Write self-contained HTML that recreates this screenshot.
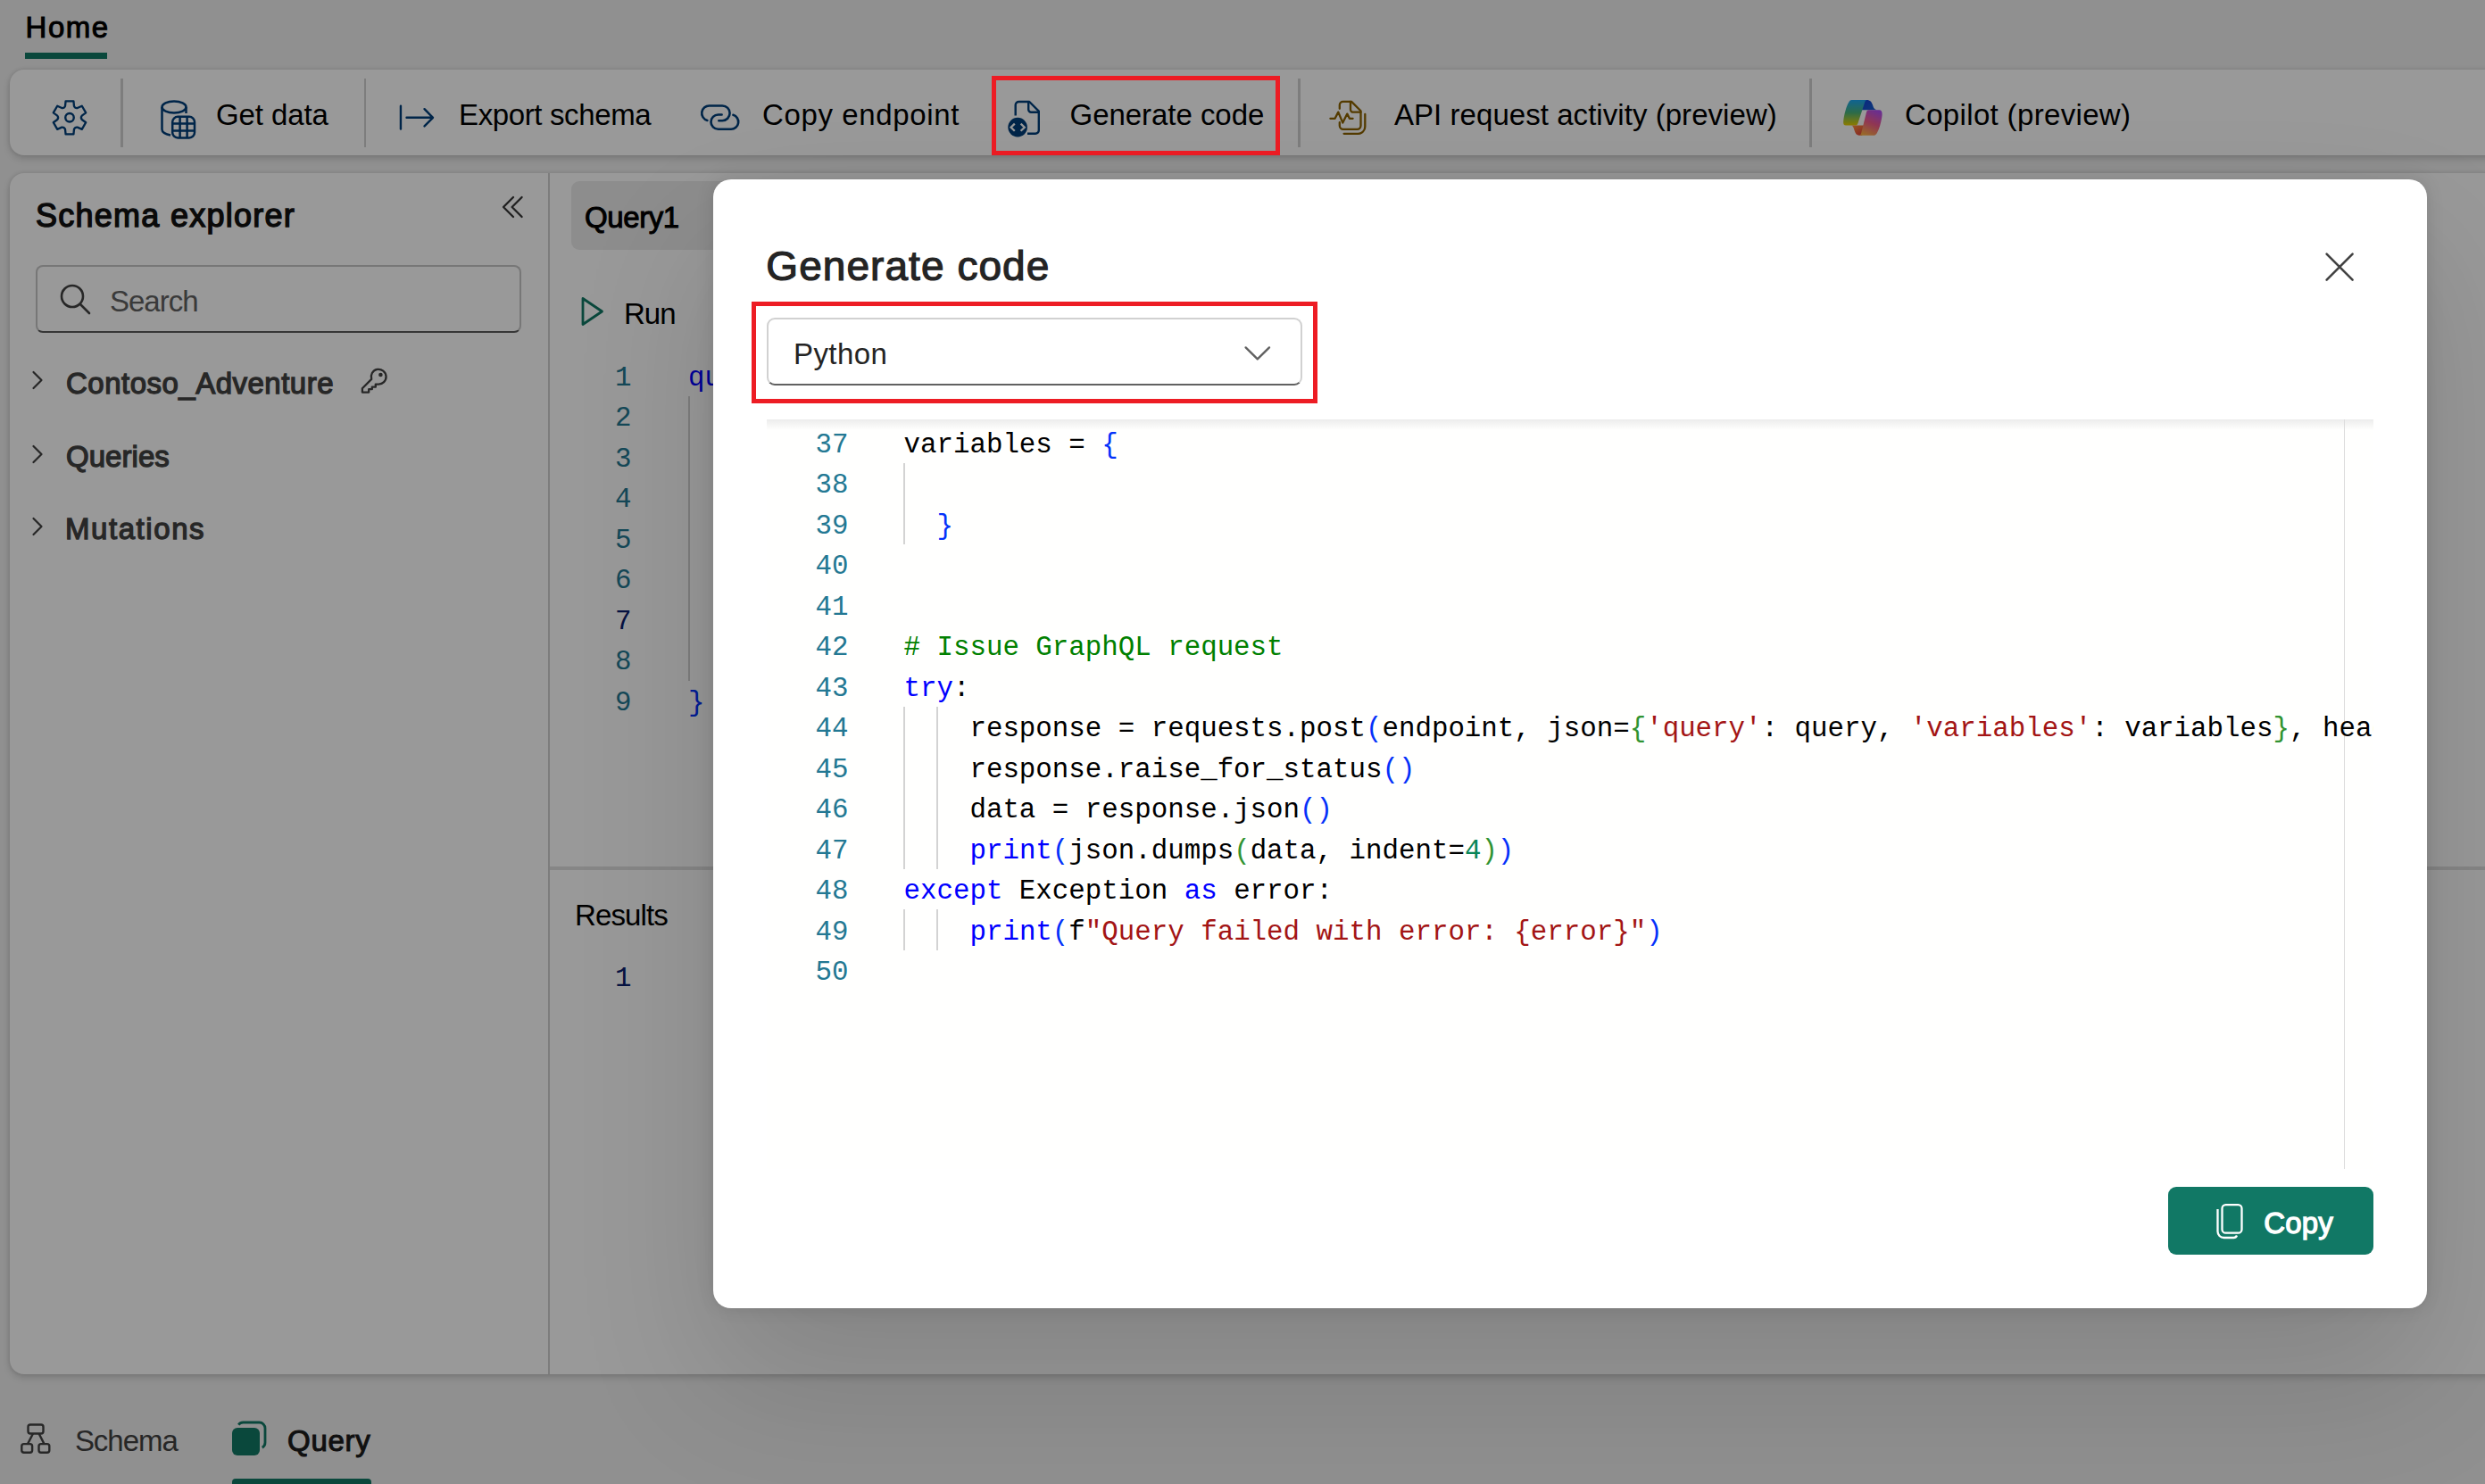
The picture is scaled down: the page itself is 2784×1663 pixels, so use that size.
<!DOCTYPE html>
<html><head><meta charset="utf-8"><style>
html,body{margin:0;padding:0}
body{width:2784px;height:1663px;position:relative;overflow:hidden;background:#f0f0f0;font-family:"Liberation Sans",sans-serif}
.t{position:absolute;white-space:pre}
.m{position:absolute;white-space:pre;font-family:"Liberation Mono",monospace;font-size:30.8px;line-height:45.52px}
.ic{position:absolute}
.card{position:absolute;background:#fff;box-shadow:0 0 5px rgba(0,0,0,0.12),0 4px 9px rgba(0,0,0,0.14)}
#overlay{position:absolute;left:0;top:0;width:2784px;height:1663px;background:rgba(0,0,0,0.4)}
#dlg{position:absolute;left:799px;top:201px;width:1920px;height:1265px;background:#fff;border-radius:20px;box-shadow:0 0 20px rgba(0,0,0,0.12),0 80px 160px rgba(0,0,0,0.14)}
.red{position:absolute;box-sizing:border-box;border:5px solid #ed1c24}
</style></head><body>
<div class="t" style="left:28.6px;top:14.0px;font-size:33px;line-height:33px;font-weight:400;letter-spacing:1.47px;color:#000000;-webkit-text-stroke:1.0px #000000;">Home</div>
<div style="position:absolute;left:28px;top:59px;width:92px;height:7px;background:#117865"></div>
<div class="card" style="left:11px;top:78px;width:2850px;height:96px;border-radius:16px"></div>
<svg class="ic" style="left:55px;top:108px" width="46" height="48" viewBox="0 0 46 48"><path d="M18.02,10.82 L18.56,5.32 L27.44,5.32 L27.98,10.82 Q29.00,13.41 31.75,13.00 L36.78,10.72 L41.22,18.40 L36.73,21.63 Q35.00,23.80 36.73,25.97 L41.22,29.20 L36.78,36.88 L31.75,34.60 Q29.00,34.19 27.98,36.78 L27.44,42.28 L18.56,42.28 L18.02,36.78 Q17.00,34.19 14.25,34.60 L9.22,36.88 L4.78,29.20 L9.27,25.97 Q11.00,23.80 9.27,21.63 L4.78,18.40 L9.22,10.72 L14.25,13.00 Q17.00,13.41 18.02,10.82 Z" fill="none" stroke="#003f7a" stroke-width="2.3" stroke-linejoin="round"/><circle cx="23" cy="23.8" r="4.75" fill="none" stroke="#003f7a" stroke-width="2.4"/></svg>
<div style="position:absolute;left:135px;top:88px;width:2.5px;height:77px;background:#d1d1d1"></div>
<div style="position:absolute;left:407.5px;top:88px;width:2.5px;height:77px;background:#d1d1d1"></div>
<div style="position:absolute;left:1454px;top:88px;width:2.5px;height:77px;background:#d1d1d1"></div>
<div style="position:absolute;left:2027px;top:88px;width:2.5px;height:77px;background:#d1d1d1"></div>
<svg class="ic" style="left:178px;top:111px" width="44" height="46" viewBox="0 0 44 46">
<g fill="none" stroke="#003f7a" stroke-width="2.5">
<ellipse cx="17" cy="9" rx="13.5" ry="6.5"/>
<path d="M3.5,9 V34 C3.5,37 8,39.5 13,40.5"/>
<path d="M30.5,9 V16"/>
<rect x="15.2" y="19.8" width="24.8" height="23.6" rx="6"/>
<path d="M23.6,19.8 V43.4 M31.6,19.8 V43.4 M15.2,27.6 H40 M15.2,35.6 H40"/>
</g></svg>
<div class="t" style="left:242.0px;top:111.7px;font-size:33px;line-height:33px;font-weight:400;letter-spacing:-0.09px;color:#000000;">Get data</div>
<svg class="ic" style="left:440px;top:110px" width="55" height="45" viewBox="0 0 55 45">
<g fill="none" stroke="#003f7a" stroke-width="2.4" stroke-linecap="round" stroke-linejoin="round">
<path d="M8.95,8.8 V34.6"/><path d="M15.5,21.8 H44.5 M35.5,12.2 L45,21.8 L35.5,31.4"/></g></svg>
<div class="t" style="left:514.0px;top:111.7px;font-size:33px;line-height:33px;font-weight:400;letter-spacing:-0.37px;color:#000000;">Export schema</div>
<svg class="ic" style="left:775px;top:105px" width="70" height="55" viewBox="0 0 70 55">
<g fill="none" stroke="#003f7a" stroke-width="2.6" stroke-linecap="round">
<path d="M17.4,29.9 A8.35,8.35 0 0 1 20.05,13.5 H34.25 A8.35,8.35 0 0 1 34.25,30.2 H30.3"/>
<path d="M33.6,23.5 H29.65 A8.15,8.15 0 0 0 29.65,39.8 H44.05 A8.15,8.15 0 0 0 46.4,23.85"/>
</g></svg>
<div class="t" style="left:854.0px;top:111.7px;font-size:33px;line-height:33px;font-weight:400;letter-spacing:0.63px;color:#000000;">Copy endpoint</div>
<svg class="ic" style="left:1120px;top:105px" width="55" height="55" viewBox="0 0 55 55">
<g fill="none" stroke="#003f7a" stroke-width="2.4" stroke-linejoin="round" stroke-linecap="butt">
<path d="M17.7,24.6 V12.8 A3.8,3.8 0 0 1 21.5,9 H33.2 L43.8,19.6 V41 A3.8,3.8 0 0 1 40,44.8 H31"/>
<path d="M32.2,9 V17.7 A3,3 0 0 0 35.2,20.7 H43.8"/>
</g>
<circle cx="20.1" cy="37.6" r="10.8" fill="#003f7a"/>
<path d="M16.8,33.7 L12.6,37.7 L16.8,41.8 M23.6,33.7 L27.8,37.7 L23.6,41.8" fill="none" stroke="#ffffff" stroke-width="2.3" stroke-linecap="butt" stroke-linejoin="miter"/>
</svg>
<div class="t" style="left:1198.6px;top:112.1px;font-size:33px;line-height:33px;font-weight:400;letter-spacing:-0.05px;color:#000000;">Generate code</div>
<svg class="ic" style="left:1483px;top:105px" width="55" height="55" viewBox="0 0 55 55">
<g fill="none" stroke="#8c6300" stroke-width="2.3" stroke-linejoin="round" stroke-linecap="round">
<path d="M17.8,16.8 V12.7 A3.8,3.8 0 0 1 21.6,8.9 H31.1 L41.5,19.3 V35.8 A4,4 0 0 1 37.5,39.8 H21.8 A4,4 0 0 1 17.8,35.8 V32.2"/>
<path d="M30,8.9 V17.7 A3,3 0 0 0 33,20.7 H41.5"/>
<path d="M46.3,23 V37 A7.8,7.8 0 0 1 38.5,44.8 H22.6"/>
<path d="M7.4,27.8 H12.6 L16.3,20.6 L21.3,32.6 L26.3,22.6 L28.9,27.8 H32.6"/>
</g></svg>
<div class="t" style="left:1562.0px;top:112.1px;font-size:33px;line-height:33px;font-weight:400;letter-spacing:0.05px;color:#000000;">API request activity (preview)</div>
<svg class="ic" style="left:2060px;top:105px" width="55" height="55" viewBox="0 0 55 55">
<defs>
<linearGradient id="cpA" x1="0" y1="0" x2="0" y2="1"><stop offset="0" stop-color="#1aa6f5"/><stop offset="0.5" stop-color="#4ab37a"/><stop offset="1" stop-color="#ecd000"/></linearGradient>
<linearGradient id="cpF" x1="0" y1="0" x2="1" y2="1"><stop offset="0" stop-color="#1040d8"/><stop offset="1" stop-color="#1a60c8"/></linearGradient>
<linearGradient id="cpB" x1="0.7" y1="0" x2="0.3" y2="1"><stop offset="0" stop-color="#b04df0"/><stop offset="0.5" stop-color="#f25c8c"/><stop offset="1" stop-color="#ffb046"/></linearGradient>
<linearGradient id="cpG" x1="0" y1="0" x2="1" y2="1"><stop offset="0" stop-color="#ff9a40"/><stop offset="1" stop-color="#e0303a"/></linearGradient>
</defs>
<path d="M28,6.9 H31.5 C35,6.9 37,9 38.3,13.5 C39,16 40,17.6 42.5,18.2 H24 Z" fill="url(#cpF)"/>
<path d="M14.5,6.9 H31.5 C30.2,6.9 29.5,8.2 29,10 L21.5,33 C21,34.6 20.2,35.6 18.5,35.6 H8 C5.8,35.6 4.9,34 5.2,31 C5.8,24 8.5,14 11,10 C12,8 13,6.9 14.5,6.9 Z" fill="url(#cpA)"/>
<path d="M14,35.6 H31 L26,46.7 H23 C20,46.7 18.5,44.5 17.5,41 C16.6,38 15.8,36 14,35.6 Z" fill="url(#cpG)"/>
<path d="M33.5,18.2 H45.2 C47.6,18.2 48.8,20 48.6,23.5 C48,31 45,41 42.6,44.4 C41.6,45.9 40.4,46.7 38.9,46.7 H22.5 C24,46.7 24.8,45.6 25.3,43.7 L31,20.8 C31.4,19.2 32.2,18.2 33.5,18.2 Z" fill="url(#cpB)"/>
</svg>
<div class="t" style="left:2134.0px;top:111.6px;font-size:33px;line-height:33px;font-weight:400;letter-spacing:0.34px;color:#000000;">Copilot (preview)</div>
<div class="card" style="left:11px;top:194px;width:2850px;height:1346px;border-radius:16px"></div>
<div class="t" style="left:40.0px;top:223.7px;font-size:36px;line-height:36px;font-weight:400;letter-spacing:1.26px;color:#111111;-webkit-text-stroke:1.4px #111111;">Schema explorer</div>
<svg class="ic" style="left:560px;top:218px" width="30" height="28" viewBox="0 0 30 28">
<g fill="none" stroke="#363636" stroke-width="2.3" stroke-linecap="round" stroke-linejoin="round">
<path d="M15,3 L4,14 L15,25 M24.6,3 L13.6,14 L24.6,25"/></g></svg>
<div style="position:absolute;left:40px;top:297px;width:544px;height:76px;box-sizing:border-box;border:2px solid #c6c6c6;border-bottom:2.5px solid #5a5a5a;border-radius:8px;background:#fff"></div>
<svg class="ic" style="left:66px;top:317px" width="38" height="38" viewBox="0 0 38 38">
<g fill="none" stroke="#424242" stroke-width="2.6" stroke-linecap="round">
<circle cx="15" cy="15" r="12"/><path d="M24,24 L34,34"/></g></svg>
<div class="t" style="left:123.0px;top:320.8px;font-size:33px;line-height:33px;font-weight:400;letter-spacing:-1.00px;color:#616161;">Search</div>
<svg class="ic" style="left:34px;top:413.5px" width="16" height="24" viewBox="0 0 16 24">
<path d="M3.5,3 L12.5,12 L3.5,21" fill="none" stroke="#424242" stroke-width="2.2" stroke-linecap="round" stroke-linejoin="round"/></svg>
<svg class="ic" style="left:34px;top:496.6px" width="16" height="24" viewBox="0 0 16 24">
<path d="M3.5,3 L12.5,12 L3.5,21" fill="none" stroke="#424242" stroke-width="2.2" stroke-linecap="round" stroke-linejoin="round"/></svg>
<svg class="ic" style="left:34px;top:578.4px" width="16" height="24" viewBox="0 0 16 24">
<path d="M3.5,3 L12.5,12 L3.5,21" fill="none" stroke="#424242" stroke-width="2.2" stroke-linecap="round" stroke-linejoin="round"/></svg>
<div class="t" style="left:74.0px;top:412.5px;font-size:33px;line-height:33px;font-weight:400;letter-spacing:0.49px;color:#424242;-webkit-text-stroke:1.3px #424242;">Contoso_Adventure</div>
<div class="t" style="left:74.0px;top:494.6px;font-size:33px;line-height:33px;font-weight:400;letter-spacing:0.05px;color:#424242;-webkit-text-stroke:1.3px #424242;">Queries</div>
<div class="t" style="left:73.0px;top:575.7px;font-size:33px;line-height:33px;font-weight:400;letter-spacing:1.56px;color:#424242;-webkit-text-stroke:1.3px #424242;">Mutations</div>
<svg class="ic" style="left:395px;top:405px" width="50" height="45" viewBox="0 0 50 45">
<path d="M21.2,19.9 L10.9,30.2 V34.6 H18.2 V31.2 H21.8 V28.7 H25.8 V25.6 H28.6 A8.4,8.4 0 1 0 21.2,19.9 Z" fill="none" stroke="#424242" stroke-width="2.3" stroke-linejoin="round"/>
<circle cx="31.4" cy="15" r="2.3" fill="#424242"/></svg>
<div style="position:absolute;left:614px;top:194px;width:2px;height:1346px;background:#d1d1d1"></div>
<div style="position:absolute;left:640px;top:203px;width:400px;height:76.5px;background:#ebebeb;border-radius:9px"></div>
<div class="t" style="left:655.0px;top:227.1px;font-size:33px;line-height:33px;font-weight:400;letter-spacing:-0.40px;color:#000000;-webkit-text-stroke:1.0px #000000;">Query1</div>
<svg class="ic" style="left:649px;top:331px" width="30" height="36" viewBox="0 0 30 36">
<path d="M4,3.5 L25.5,18 L4,32.5 Z" fill="none" stroke="#117865" stroke-width="2.8" stroke-linejoin="round"/></svg>
<div class="t" style="left:698.9px;top:334.7px;font-size:33px;line-height:33px;font-weight:400;letter-spacing:-0.95px;color:#000000;">Run</div>
<div class="m" style="left:688.5px;top:400.5px;width:19px;text-align:right;color:#237893">1</div>
<div class="m" style="left:688.5px;top:446.0px;width:19px;text-align:right;color:#237893">2</div>
<div class="m" style="left:688.5px;top:491.5px;width:19px;text-align:right;color:#237893">3</div>
<div class="m" style="left:688.5px;top:537.0px;width:19px;text-align:right;color:#237893">4</div>
<div class="m" style="left:688.5px;top:582.5px;width:19px;text-align:right;color:#237893">5</div>
<div class="m" style="left:688.5px;top:628.0px;width:19px;text-align:right;color:#237893">6</div>
<div class="m" style="left:688.5px;top:673.5px;width:19px;text-align:right;color:#0b216f">7</div>
<div class="m" style="left:688.5px;top:719.0px;width:19px;text-align:right;color:#237893">8</div>
<div class="m" style="left:688.5px;top:764.5px;width:19px;text-align:right;color:#237893">9</div>
<div class="m" style="left:771px;top:400.5px;color:#0000ff">query</div>
<div class="m" style="left:771px;top:764.5px;color:#0431fa">}</div>
<div style="position:absolute;left:771px;top:443.5px;width:2px;height:319px;background:#d3d3d3"></div>
<div style="position:absolute;left:616px;top:971px;width:2300px;height:4px;background:#e0e0e0"></div>
<div class="t" style="left:644.0px;top:1009.1px;font-size:33px;line-height:33px;font-weight:400;letter-spacing:-0.88px;color:#000000;">Results</div>
<div class="m" style="left:689px;top:1073.5px;color:#0b216f">1</div>
<svg class="ic" style="left:22px;top:1594.2px" width="38" height="38" viewBox="0 0 38 38">
<g fill="none" stroke="#424242" stroke-width="2.4" stroke-linejoin="round">
<rect x="9.5" y="2.5" width="17" height="10" rx="2.5"/>
<rect x="2.3" y="24.1" width="11.8" height="9.6" rx="2.5"/>
<rect x="21.5" y="24.1" width="11.8" height="9.6" rx="2.5"/>
<path d="M15,12.5 L9,24.1 M21.6,12.5 L27.5,24.1"/></g></svg>
<div class="t" style="left:83.9px;top:1598.1px;font-size:33px;line-height:33px;font-weight:400;letter-spacing:-1.04px;color:#424242;">Schema</div>
<svg class="ic" style="left:258px;top:1591px" width="42" height="42" viewBox="0 0 42 42">
<path d="M9.2,5.6 A6.5,6.5 0 0 1 14.5,3 H32.5 A6.5,6.5 0 0 1 39,9.5 V25.5 A6.5,6.5 0 0 1 35.8,31.2" fill="none" stroke="#117865" stroke-width="2.8"/>
<rect x="2" y="9" width="31" height="31" rx="6" fill="#117865"/></svg>
<div class="t" style="left:322.0px;top:1598.1px;font-size:33px;line-height:33px;font-weight:400;letter-spacing:0.75px;color:#1c1c1c;-webkit-text-stroke:1.1px #1c1c1c;">Query</div>
<div style="position:absolute;left:260px;top:1656.5px;width:156px;height:10px;background:#117865;border-radius:4px"></div>
<div id="overlay"></div>
<div class="red" style="left:1111px;top:85px;width:323px;height:89px"></div>
<div id="dlg"></div>
<div class="t" style="left:858.3px;top:274.8px;font-size:46px;line-height:46px;font-weight:400;letter-spacing:1.06px;color:#242424;-webkit-text-stroke:1.2px #242424;">Generate code</div>
<svg class="ic" style="left:2602px;top:280px" width="38" height="38" viewBox="0 0 38 38">
<path d="M4.6,4.6 L33.6,33.6 M33.6,4.6 L4.6,33.6" fill="none" stroke="#424242" stroke-width="2.6" stroke-linecap="round"/></svg>
<div style="position:absolute;left:859px;top:356px;width:600px;height:76px;box-sizing:border-box;border:2px solid #d1d1d1;border-bottom:2.5px solid #616161;border-radius:9px;background:#fff"></div>
<div class="t" style="left:889.0px;top:380.0px;font-size:33px;line-height:33px;font-weight:400;letter-spacing:0.40px;color:#242424;">Python</div>
<svg class="ic" style="left:1392px;top:385px" width="34" height="22" viewBox="0 0 34 22">
<path d="M3.6,4.4 L16.8,17.4 L30,4.4" fill="none" stroke="#616161" stroke-width="2.4" stroke-linecap="round" stroke-linejoin="round"/></svg>
<div style="position:absolute;left:859px;top:470px;width:1800px;height:840px;background:#fffffe;overflow:hidden" id="code">
<div style="position:absolute;left:0;top:0;width:100%;height:12px;background:linear-gradient(#ececec,rgba(255,255,254,0))"></div>
<div style="position:absolute;left:1767px;top:0;width:1px;height:840px;background:#dcdcdc"></div>
<div class="m" style="left:54.5px;top:5.5px;color:#237893">37</div>
<div class="m" style="left:153.5px;top:5.5px"><span style="color:#000000">variables = </span><span style="color:#0431fa">{</span></div>
<div class="m" style="left:54.5px;top:51.0px;color:#237893">38</div>
<div style="position:absolute;left:153.0px;top:48.5px;width:2px;height:45.5px;background:#d3d3d3"></div>
<div class="m" style="left:54.5px;top:96.5px;color:#237893">39</div>
<div class="m" style="left:153.5px;top:96.5px"><span style="color:#000000">  </span><span style="color:#0431fa">}</span></div>
<div style="position:absolute;left:153.0px;top:94.0px;width:2px;height:45.5px;background:#d3d3d3"></div>
<div class="m" style="left:54.5px;top:142.1px;color:#237893">40</div>
<div class="m" style="left:54.5px;top:187.6px;color:#237893">41</div>
<div class="m" style="left:54.5px;top:233.1px;color:#237893">42</div>
<div class="m" style="left:153.5px;top:233.1px"><span style="color:#008000"># Issue GraphQL request</span></div>
<div class="m" style="left:54.5px;top:278.6px;color:#237893">43</div>
<div class="m" style="left:153.5px;top:278.6px"><span style="color:#0000ff">try</span><span style="color:#000000">:</span></div>
<div class="m" style="left:54.5px;top:324.1px;color:#237893">44</div>
<div class="m" style="left:153.5px;top:324.1px"><span style="color:#000000">    response = requests.post</span><span style="color:#0431fa">(</span><span style="color:#000000">endpoint, json=</span><span style="color:#319331">{</span><span style="color:#a31515">'query'</span><span style="color:#000000">: query, </span><span style="color:#a31515">'variables'</span><span style="color:#000000">: variables</span><span style="color:#319331">}</span><span style="color:#000000">, headers=headers</span><span style="color:#0431fa">)</span></div>
<div style="position:absolute;left:153.0px;top:321.6px;width:2px;height:45.5px;background:#d3d3d3"></div>
<div style="position:absolute;left:190.0px;top:321.6px;width:2px;height:45.5px;background:#d3d3d3"></div>
<div class="m" style="left:54.5px;top:369.7px;color:#237893">45</div>
<div class="m" style="left:153.5px;top:369.7px"><span style="color:#000000">    response.raise_for_status</span><span style="color:#0431fa">()</span></div>
<div style="position:absolute;left:153.0px;top:367.2px;width:2px;height:45.5px;background:#d3d3d3"></div>
<div style="position:absolute;left:190.0px;top:367.2px;width:2px;height:45.5px;background:#d3d3d3"></div>
<div class="m" style="left:54.5px;top:415.2px;color:#237893">46</div>
<div class="m" style="left:153.5px;top:415.2px"><span style="color:#000000">    data = response.json</span><span style="color:#0431fa">()</span></div>
<div style="position:absolute;left:153.0px;top:412.7px;width:2px;height:45.5px;background:#d3d3d3"></div>
<div style="position:absolute;left:190.0px;top:412.7px;width:2px;height:45.5px;background:#d3d3d3"></div>
<div class="m" style="left:54.5px;top:460.7px;color:#237893">47</div>
<div class="m" style="left:153.5px;top:460.7px"><span style="color:#000000">    </span><span style="color:#0000ff">print</span><span style="color:#0431fa">(</span><span style="color:#000000">json.dumps</span><span style="color:#319331">(</span><span style="color:#000000">data, indent=</span><span style="color:#098658">4</span><span style="color:#319331">)</span><span style="color:#0431fa">)</span></div>
<div style="position:absolute;left:153.0px;top:458.2px;width:2px;height:45.5px;background:#d3d3d3"></div>
<div style="position:absolute;left:190.0px;top:458.2px;width:2px;height:45.5px;background:#d3d3d3"></div>
<div class="m" style="left:54.5px;top:506.2px;color:#237893">48</div>
<div class="m" style="left:153.5px;top:506.2px"><span style="color:#0000ff">except</span><span style="color:#000000"> Exception </span><span style="color:#0000ff">as</span><span style="color:#000000"> error:</span></div>
<div class="m" style="left:54.5px;top:551.7px;color:#237893">49</div>
<div class="m" style="left:153.5px;top:551.7px"><span style="color:#000000">    </span><span style="color:#0000ff">print</span><span style="color:#0431fa">(</span><span style="color:#000000">f</span><span style="color:#a31515">"Query failed with error: {error}"</span><span style="color:#0431fa">)</span></div>
<div style="position:absolute;left:153.0px;top:549.2px;width:2px;height:45.5px;background:#d3d3d3"></div>
<div style="position:absolute;left:190.0px;top:549.2px;width:2px;height:45.5px;background:#d3d3d3"></div>
<div class="m" style="left:54.5px;top:597.3px;color:#237893">50</div>
</div>
<div style="position:absolute;left:2429px;top:1330px;width:230px;height:76px;background:#117865;border-radius:9px"></div>
<svg class="ic" style="left:2481px;top:1346px" width="34" height="44" viewBox="0 0 34 44">
<g fill="none" stroke="#fff" stroke-width="2.3">
<rect x="8.5" y="4.2" width="22" height="31.5" rx="4"/>
<path d="M3.5,9 V34 A7,7 0 0 0 10.5,41 H21 A4,4 0 0 0 25,38.5"/></g></svg>
<div class="t" style="left:2536.3px;top:1354.1px;font-size:33px;line-height:33px;font-weight:400;letter-spacing:0.17px;color:#ffffff;-webkit-text-stroke:1.3px #ffffff;">Copy</div>
<div class="red" style="left:842px;top:338px;width:634px;height:114px"></div>
</body></html>
